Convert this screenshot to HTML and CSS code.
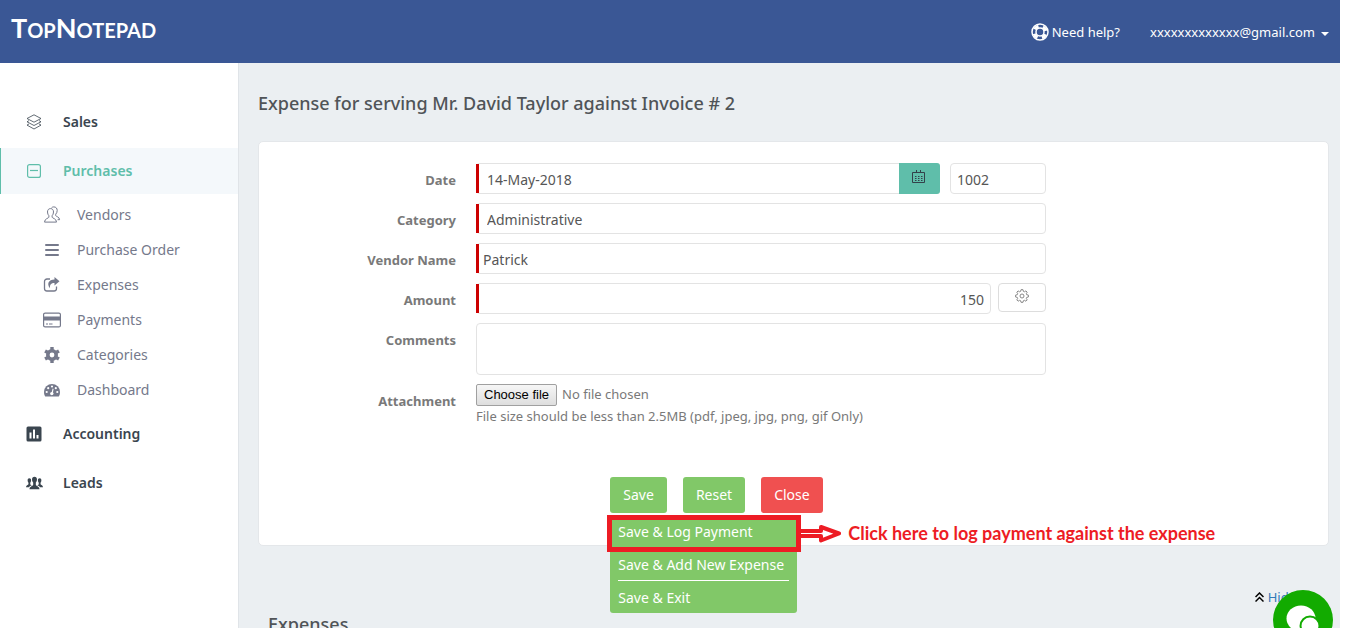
FILE: index.html
```html
<!DOCTYPE html>
<html lang="en">
<head>
    <meta charset="UTF-8">
    <meta name="viewport" content="width=device-width, initial-scale=1.0">
    <title>TopNotepad - Expense</title>
    <link rel="stylesheet" href="styles.css">
</head>
<body>
<!-- Header -->
<header class="topbar">
    <a href="#" class="logo">T<small>OP</small>N<small>OTEPAD</small></a>
    <div class="topbar-links">
        <a href="#" class="help">
            <svg width="18" height="18" viewBox="0 0 18 18" fill="none" stroke="#fff">
                <circle cx="9" cy="9" r="8" stroke-width="1.5"/>
                <circle cx="9" cy="9" r="5.8" stroke-width="3.6" stroke-dasharray="4.6 4.51" stroke-dashoffset="-2.3"/>
                <circle cx="9" cy="9" r="4" stroke-width="1.5"/>
            </svg>
            Need help?
        </a>
        <a href="#" class="account">xxxxxxxxxxxxx@gmail.com <span class="caret"></span></a>
    </div>
</header>

<div class="layout">
    <!-- Sidebar -->
    <nav class="sidebar">
        <ul class="menu">
            <li>
                <a href="#" class="menu-item">
                    <svg width="16" height="16" viewBox="0 0 16 16" fill="none" stroke="currentColor" stroke-width=".8">
                        <path d="M8 .8L15 4.5 8 8.2 1 4.5z"/>
                        <path d="M3 6.6L1 7.8l7 3.7 7-3.7-2-1.2M3 9.9l-2 1.2 7 3.9 7-3.9-2-1.2"/>
                    </svg>
                    Sales
                </a>
            </li>
            <li>
                <a href="#" class="menu-item active">
                    <svg width="16" height="16" viewBox="0 0 16 16" fill="none" stroke="currentColor" stroke-width="1.2">
                        <rect x="1.6" y="1.6" width="12.8" height="12.8" rx="2"/>
                        <path d="M4 7.5h8"/>
                    </svg>
                    Purchases
                </a>
                <ul class="submenu">
                    <li><a href="#">
                        <svg width="18" height="18" viewBox="0 0 18 18" fill="none" stroke="currentColor" stroke-width="1">
                            <path d="M7.5 2.6c2 0 3 1.4 3 3.4 0 1.700-.6 2.900-1.400 3.700v1.500c0 1 4.400 1.300 4.400 4.900H1.500c0-3.600 4.400-3.900 4.400-4.900V9.700C5.100 8.900 4.500 7.700 4.500 6c0-2 1-3.400 3-3.400z"/>
                            <path d="M8.500 1.900C9 1.200 9.900.9 10.800.9c2.200 0 3.400 1.500 3.400 3.600 0 1.700-.7 2.900-1.500 3.700v1.300c0 1 3.800 1.200 3.900 4.200h-2"/>
                        </svg>
                        Vendors</a></li>
                    <li><a href="#">
                        <svg width="18" height="18" viewBox="0 0 18 18" fill="currentColor">
                            <rect x="2" y="3" width="14" height="2" rx="1"/>
                            <rect x="2" y="8" width="14" height="2" rx="1"/>
                            <rect x="2" y="13" width="14" height="2" rx="1"/>
                        </svg>
                        Purchase Order</a></li>
                    <li><a href="#">
                        <svg width="18" height="18" viewBox="0 0 18 18" fill="none">
                            <path d="M7 3H4a2.500 2.500 0 0 0-2.500 2.500v7A2.500 2.500 0 0 0 4 15h7a2.500 2.500 0 0 0 2.500-2.500V10.500" stroke="currentColor" stroke-width="1.300"/>
                            <path d="M11.500 1l5 4.200-5 4.200V7C8 7 6.700 8.500 7 12.300 3.500 8 5.500 3.600 11.500 3.500z" fill="currentColor"/>
                        </svg>
                        Expenses</a></li>
                    <li><a href="#">
                        <svg width="18" height="18" viewBox="0 0 18 18">
                            <rect x=".6" y="2.100" width="16.800" height="13.800" rx="1.500" fill="none" stroke="currentColor" stroke-width="1.200"/>
                            <path d="M.6 5.500h16.800v4H.6zM3 12.500h2v1H3zM6 12.500h3.500v1H6z" fill="currentColor"/>
                        </svg>
                        Payments</a></li>
                    <li><a href="#">
                        <svg width="18" height="18" viewBox="0 0 18 18">
                            <circle cx="9" cy="9" r="4.200" fill="none" stroke="currentColor" stroke-width="3.600"/>
                            <path d="M7.300 1h3.400v3H7.300zM7.300 14h3.400v3H7.300zM1.200 6.500l1.700-3 2.900 1.600-1.700 3zM12.200 12.900l1.700-3 2.900 1.600-1.700 3zM1.200 11.500l2.900-1.600 1.700 3-2.900 1.600zM12.200 5.100l2.900-1.600 1.700 3-2.900 1.600z" fill="currentColor"/>
                        </svg>
                        Categories</a></li>
                    <li><a href="#">
                        <svg width="18" height="18" viewBox="0 0 18 18">
                            <path d="M1 11a8 8 0 0 1 16 0c0 1.800-.4 3.200-1.200 4.500H2.200C1.400 14.200 1 12.800 1 11z" fill="currentColor"/>
                            <g fill="#fff">
                                <circle cx="3.700" cy="11" r="1.100"/>
                                <circle cx="5.200" cy="7.200" r="1.100"/>
                                <circle cx="9" cy="5.500" r="1.100"/>
                                <circle cx="12.800" cy="7.200" r="1.100"/>
                                <circle cx="14.300" cy="11" r="1.100"/>
                                <circle cx="8.800" cy="12.600" r="1.700"/>
                                <path d="M9.600 7.600l1 .3-1 5-1.200-.3z"/>
                            </g>
                        </svg>
                        Dashboard</a></li>
                </ul>
            </li>
            <li>
                <a href="#" class="menu-item">
                    <svg width="16" height="16" viewBox="0 0 16 16">
                        <rect x=".5" y=".5" width="15" height="15" rx="1.500" fill="currentColor"/>
                        <path d="M3.500 6.500h2v6h-2zM7 3.500h2v9H7zM10.500 9h2v3.500h-2z" fill="#fff"/>
                    </svg>
                    Accounting
                </a>
            </li>
            <li>
                <a href="#" class="menu-item">
                    <svg width="17" height="16" viewBox="0 0 18 16" fill="currentColor">
                        <path d="M9 1.500c1.700 0 2.600 1.100 2.600 2.800 0 1.400-.5 2.400-1.200 3.100v2.400c.5 1.600 3.900 1.700 3.900 4.700H3.700c0-3 3.400-3.100 3.900-4.700V7.400C6.900 6.700 6.400 5.700 6.400 4.300c0-1.700.9-2.800 2.600-2.800z"/>
                        <path d="M3.500 3C4.800 3 5.400 3.900 5.400 5.200c0 1.200-.4 2-.9 2.500v1.600c.3.600 1 .8 1.700 1.200-1.500.6-2.500 1.200-2.900 2H0c0-2.200 2.200-2.200 2.600-3.200V7.700c-.5-.5-.9-1.300-.9-2.500C1.700 3.900 2.300 3 3.500 3z"/>
                        <path d="M14.500 3c-1.300 0-1.900.9-1.900 2.200 0 1.200.4 2 .9 2.500v1.600c-.3.600-1 .8-1.700 1.200 1.500.6 2.500 1.200 2.900 2H18c0-2.200-2.200-2.200-2.600-3.200V7.700c.5-.5.900-1.300.9-2.500 0-1.300-.6-2.200-1.800-2.200z"/>
                    </svg>
                    Leads
                </a>
            </li>
        </ul>
    </nav>

    <!-- Main content -->
    <main class="main-content">
        <h1>Expense for serving Mr. David Taylor against Invoice # 2</h1>

        <section class="panel">
            <form class="expense-form">
                <div class="form-row">
                    <label for="date">Date</label>
                    <div class="control">
                        <div class="input-group required">
                            <input type="text" id="date" class="field inset" value="14-May-2018">
                            <button type="button" class="btn-calendar" aria-label="Pick a date">
                                <svg width="14" height="14" viewBox="0 0 14 14" fill="none" stroke="#33414a">
                                    <path d="M.5 2.500h12v10H.5zM4.500 0v3M8.500 0v3"/>
                                    <path d="M3 6.500h8M3 8.500h8M3 10.500h8" stroke-dasharray="1.500 1.500"/>
                                </svg>
                            </button>
                        </div>
                        <input type="text" class="field number" value="1002" aria-label="Expense number">
                    </div>
                </div>
                <div class="form-row">
                    <label for="category">Category</label>
                    <div class="control required">
                        <select id="category" class="field inset">
                            <option>Administrative</option>
                        </select>
                    </div>
                </div>
                <div class="form-row">
                    <label for="vendor">Vendor Name</label>
                    <div class="control required">
                        <input type="text" id="vendor" class="field" value="Patrick">
                    </div>
                </div>
                <div class="form-row">
                    <label for="amount">Amount</label>
                    <div class="control amount required">
                        <input type="text" id="amount" class="field right" value="150">
                        <button type="button" class="btn-settings" aria-label="Amount settings">
                            <svg width="14" height="14" viewBox="0 0 14 14" fill="none" stroke="#888">
                                <path d="M6 .7h2l.4 1.700 1 .4 1.500-.9 1.300 1.300-.9 1.500.4 1 1.700.4v1.900l-1.700.4-.4 1 .9 1.500-1.300 1.300-1.500-.9-1 .4L8 13.300H6l-.4-1.600-1-.4-1.500.9-1.300-1.300.9-1.500-.4-1L.6 8V6.100l1.700-.4.4-1-.9-1.500 1.300-1.300 1.500.9 1-.4z"/>
                                <circle cx="7" cy="7" r="2"/>
                            </svg>
                        </button>
                    </div>
                </div>
                <div class="form-row">
                    <label for="comments">Comments</label>
                    <div class="control">
                        <textarea id="comments" class="field"></textarea>
                    </div>
                </div>
                <div class="form-row">
                    <label for="attachment">Attachment</label>
                    <div class="control upload">
                        <input type="file" id="attachment" class="file-input">
                        <label for="attachment" class="file-button">Choose file</label>
                        <span>No file chosen</span>
                        <p>File size should be less than 2.5MB (pdf, jpeg, jpg, png, gif Only)</p>
                    </div>
                </div>
                <div class="actions">
                    <div class="save-group">
                        <button type="button" class="btn">Save</button>
                        <ul class="dropdown">
                            <li><a href="#">Save &amp; Log Payment</a></li>
                            <li><a href="#">Save &amp; Add New Expense</a></li>
                            <li><a href="#">Save &amp; Exit</a></li>
                        </ul>
                        <!-- Callout on the first menu entry -->
                        <div class="callout">
                            <div class="callout-box"></div>
                            <svg width="40" height="20" viewBox="0 0 40 20">
                                <path d="M0 7h20V3l18 6.500L20 16.500V12H0" fill="#fff" stroke="#ed1c24" stroke-width="4" stroke-linejoin="round"/>
                            </svg>
                            <strong>Click here to log payment against the expense</strong>
                        </div>
                    </div>
                    <button type="reset" class="btn">Reset</button>
                    <button type="button" class="btn btn-close">Close</button>
                </div>
            </form>
        </section>

        <a href="#" class="toggle">
            <svg width="9" height="10" viewBox="0 0 9 10" fill="none" stroke="#000" stroke-width="1.500">
                <path d="M.5 5l4-4 4 4M.5 9.500l4-4 4 4"/>
            </svg>
            Hide
        </a>
        <h2>Expenses</h2>
    </main>
</div>

<button type="button" class="chat" aria-label="Open chat">
    <svg width="60" height="60" viewBox="0 0 60 60">
        <ellipse cx="28" cy="28.500" rx="14.500" ry="13" fill="#fff"/>
        <circle cx="37" cy="36" r="9.500" fill="#fff" stroke="#12ab00" stroke-width="2"/>
    </svg>
</button>
</body>
</html>
```
FILE: styles.css
```css
* {
    box-sizing: border-box;
}
body {
    font-family: "Noto Sans", "Open Sans", sans-serif;
    font-size: 14px;
    line-height: 20px;
    color: #777;
    background: #fff;
    margin: 0 20px 0 0;
    height: 100vh;
    display: flex;
    flex-direction: column;
    overflow: hidden;
}
a {
    text-decoration: none;
    color: inherit;
}
ul {
    list-style: none;
    margin: 0;
    padding: 0;
}
svg {
    flex-shrink: 0;
}

/* Header */
.topbar {
    height: 63px;
    flex-shrink: 0;
    padding: 0 11px;
    background: #3a5795;
    color: #fff;
    display: flex;
    justify-content: space-between;
    align-items: center;
}
.logo {
    font-family: Lato, sans-serif;
    font-size: 27px;
    line-height: 40px;
    font-weight: bold;
    padding-bottom: 6px;
}
.logo small {
    font-size: 20px;
}
.topbar-links {
    display: flex;
    gap: 30px;
    font-size: 13px;
}
.help {
    display: flex;
    align-items: center;
    gap: 3px;
}
.account {
    display: flex;
    align-items: center;
    gap: 6px;
}
.caret {
    border-top: 4px solid #fff;
    border-left: 4px solid transparent;
    border-right: 4px solid transparent;
    margin-top: 4px;
}

/* Sidebar */
.layout {
    flex: 1;
    display: flex;
    min-height: 0;
}
.sidebar {
    width: 239px;
    flex-shrink: 0;
    padding-top: 36px;
    border-right: 1px solid #e0e4e8;
}
.menu {
    display: flex;
    flex-direction: column;
    gap: 3px;
}
.menu-item {
    height: 46px;
    padding-left: 25px;
    border-left: 1px solid transparent;
    display: grid;
    grid-template-columns: 17px 1fr;
    gap: 20px;
    align-items: center;
    justify-items: start;
    font-weight: 600;
    color: #3a454f;
}
.menu-item.active {
    color: #5fbeaa;
    background: #f4f8fb;
    border-left-color: #5fbeaa;
}
.submenu {
    padding: 3px 0 1px 43px;
}
.submenu a {
    height: 35px;
    display: flex;
    align-items: center;
    gap: 16px;
    color: #75798b;
}

/* Main content */
.main-content {
    flex: 1;
    min-width: 0;
    padding: 28px 11px 0 19px;
    background: #ebeff2;
}
h1,
h2 {
    margin: 0;
    font-size: 18px;
    line-height: 24px;
    font-weight: 500;
    color: #505458;
}
h2 {
    padding-left: 10px;
    margin-top: 5px;
}
.panel {
    margin-top: 26px;
    height: 405px;
    padding-top: 21px;
    background: #fff;
    border: 1px solid #e4e7ea;
    border-radius: 5px;
}
.expense-form {
    max-width: 915px;
    display: flex;
    flex-direction: column;
    gap: 9px;
}
.form-row {
    display: flex;
    gap: 20px;
}
.form-row > label {
    width: 197px;
    flex-shrink: 0;
    padding-top: 7px;
    font-size: 13px;
    font-weight: bold;
    text-align: right;
    color: #797979;
}
.control {
    width: 570px;
    display: flex;
    gap: 10px;
}
.control.amount {
    gap: 7px;
}
.required {
    position: relative;
}
.required::before {
    content: "";
    position: absolute;
    top: 1px;
    left: 0;
    width: 3px;
    height: 29px;
    background: #c00;
}
.field {
    flex: 1;
    min-width: 0;
    height: 31px;
    padding: 1px 6px 0;
    border: 1px solid #e3e3e3;
    border-radius: 4px;
    background: #fff;
    font-family: inherit;
    font-size: 14px;
    color: #565656;
    appearance: none;
}
.field.inset {
    padding-left: 10px;
}
.field.number {
    flex: 0 0 96px;
}
.field.right {
    text-align: right;
}
textarea.field {
    height: 52px;
    resize: none;
}
.input-group {
    flex: 1;
    display: flex;
}
.input-group .field {
    border-radius: 4px 0 0 4px;
    border-right: 0;
}
.btn-calendar {
    width: 41px;
    padding: 0 2px 0 0;
    border: 0;
    border-radius: 0 3px 3px 0;
    background: #5fbeaa;
}
.btn-settings {
    width: 48px;
    height: 29px;
    padding: 0;
    border: 1px solid #ddd;
    border-radius: 4px;
    background: #fff;
}

/* Attachment */
.control.upload {
    flex-wrap: wrap;
    gap: 0 5px;
    font-size: 13px;
    color: #797979;
}
.file-input {
    position: absolute;
    width: 1px;
    height: 1px;
    opacity: 0;
}
.file-button {
    height: 22px;
    padding: 0 7px;
    border: 1px solid #a0a0a0;
    border-radius: 2px;
    background: linear-gradient(#f6f6f6, #dedede);
    font-family: "Liberation Sans", Arial, sans-serif;
    font-size: 13px;
    color: #000;
}
.upload p {
    width: 100%;
    margin: 0;
}

/* Buttons */
.actions {
    display: flex;
    justify-content: center;
    gap: 16px;
    margin-top: 42px;
}
.save-group {
    position: relative;
}
.btn {
    height: 36px;
    padding: 0 13px 2px;
    border: 0;
    border-radius: 3px;
    background: #81c868;
    font-family: inherit;
    font-size: 14px;
    color: #fff;
}
.btn-close {
    background: #f05050;
}
.dropdown {
    position: absolute;
    top: 38px;
    left: 0;
    width: 187px;
    padding: 0 8px;
    background: #81c868;
    border-radius: 0 0 3px 3px;
    color: #fff;
}
.dropdown a {
    display: block;
    padding: 7px 0 5px;
    border-bottom: 1px solid #fff;
}
.dropdown li:last-child a {
    border-bottom: 0;
}
.callout {
    position: absolute;
    top: 38px;
    left: -3px;
    display: flex;
    align-items: center;
    font-family: Lato, sans-serif;
    font-size: 18px;
    color: #ed1c24;
    white-space: nowrap;
}
.callout-box {
    width: 194px;
    height: 37px;
    border: 5px solid #ed1c24;
}
.callout strong {
    margin-left: 7px;
    padding-bottom: 2px;
}

/* Lower section */
.toggle {
    display: flex;
    justify-content: flex-end;
    align-items: center;
    gap: 4px;
    margin-top: 41px;
    padding-right: 33px;
    color: #337ab7;
    font-size: 13px;
}
.chat {
    position: fixed;
    right: 27px;
    bottom: -22px;
    width: 60px;
    height: 60px;
    padding: 0;
    border: 0;
    border-radius: 50%;
    background: #12ab00;
}
```
